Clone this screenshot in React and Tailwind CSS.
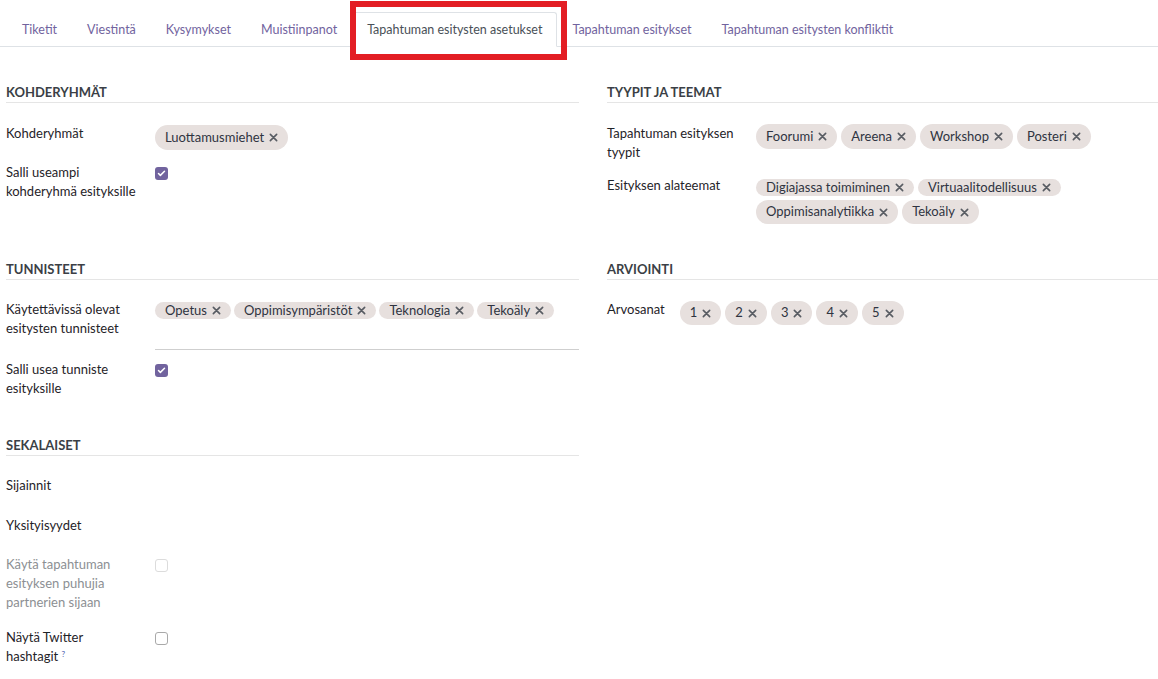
import { Check } from 'lucide-react'

const tabs = [
  'Tiketit',
  'Viestintä',
  'Kysymykset',
  'Muistiinpanot',
  'Tapahtuman esitysten asetukset',
  'Tapahtuman esitykset',
  'Tapahtuman esitysten konfliktit',
]

function XIcon() {
  return (
    <svg width="9" height="9" viewBox="0 0 10 10" className="shrink-0">
      <path d="M1.5 1.5 L8.5 8.5 M8.5 1.5 L1.5 8.5" stroke="#585c63" strokeWidth="1.8" strokeLinecap="round" />
    </svg>
  )
}

function Tag({ text, h = 'h-[25px]' }) {
  return (
    <span className={`inline-flex items-center gap-[5px] rounded-full bg-[#e7e0de] px-[10px] text-[13px] text-[#2f3441] whitespace-nowrap ${h}`}>
      {text}
      <XIcon />
    </span>
  )
}

function CheckBox({ checked, disabled }) {
  if (checked) {
    return (
      <span className="flex h-[13px] w-[13px] items-center justify-center rounded-[3px] bg-[#71639e]">
        <Check className="h-[9px] w-[9px] text-white" strokeWidth={4} />
      </span>
    )
  }
  return (
    <span
      className={`block h-[13px] w-[13px] rounded-[3px] border bg-white ${
        disabled ? 'border-[#dcdcdc]' : 'border-[#a9a9a9]'
      }`}
    />
  )
}

function Header({ children }) {
  return (
    <div className="border-b border-[#e5e5e5] pb-[1px] text-[13px] font-bold uppercase leading-[17px] text-[#3b3f46]">
      {children}
    </div>
  )
}

function Row({ label, children, className = '', muted }) {
  return (
    <div className={`grid grid-cols-[149px_1fr] ${className}`}>
      <div className={`text-[13px] leading-[19px] ${muted ? 'text-[#8c8f93]' : 'text-[#1f2328]'}`}>{label}</div>
      <div>{children}</div>
    </div>
  )
}

export default function App() {
  return (
    <div className="relative min-h-screen bg-white font-['Lato',sans-serif]">
      {/* tab bar */}
      <div className="flex border-b border-[#dee2e6] pl-[7px] pt-[12px]">
        {tabs.map((t, i) => {
          const active = i === 4
          return (
            <div
              key={t}
              className={`-mb-px text-[12.5px] leading-[19px] ${
                active
                  ? 'rounded-t-[3px] border border-b-white border-[#dee2e6] bg-white px-[14px] py-[7px] text-[#495057]'
                  : 'px-[15px] pb-[8px] pt-[8px] text-[#71639e]'
              }`}
            >
              {t}
            </div>
          )
        })}
      </div>

      {/* highlight box */}
      <div className="pointer-events-none absolute left-[350px] top-[1px] h-[59px] w-[217px] border-[6px] border-[#e31e24]" />

      <div className="grid grid-cols-[573px_1fr] gap-x-[28px] pl-[6px] pt-[37px]">
        {/* KOHDERYHMÄT */}
        <div>
          <Header>Kohderyhmät</Header>
          <div className="mt-[21px]">
            <Row label="Kohderyhmät">
              <Tag text="Luottamusmiehet" />
            </Row>
            <Row label={<>Salli useampi<br />kohderyhmä esityksille</>} className="mt-[13px]">
              <div className="pt-[4px]">
                <CheckBox checked />
              </div>
            </Row>
          </div>
        </div>

        {/* TYYPIT JA TEEMAT */}
        <div>
          <Header>Tyypit ja teemat</Header>
          <div className="mt-[21px]">
            <Row label={<>Tapahtuman esityksen<br />tyypit</>}>
              <div className="flex flex-wrap gap-[4px]">
                <Tag text="Foorumi" />
                <Tag text="Areena" />
                <Tag text="Workshop" />
                <Tag text="Posteri" />
              </div>
            </Row>
            <Row label="Esityksen alateemat" className="mt-[14px]">
              <div className="flex flex-col gap-[4px] pt-[3px]">
                <div className="flex gap-[4px]">
                  <Tag text="Digiajassa toimiminen" h="h-[17px]" />
                  <Tag text="Virtuaalitodellisuus" h="h-[17px]" />
                </div>
                <div className="flex gap-[4px]">
                  <Tag text="Oppimisanalytiikka" h="h-[24px]" />
                  <Tag text="Tekoäly" h="h-[24px]" />
                </div>
              </div>
            </Row>
          </div>
        </div>

        {/* TUNNISTEET */}
        <div className="mt-[37px]">
          <Header>Tunnisteet</Header>
          <div className="mt-[20px]">
            <Row label={<>Käytettävissä olevat<br />esitysten tunnisteet</>}>
              <div className="h-[50px] border-b border-[#cfcfcf] pt-[2px]">
                <div className="flex flex-wrap gap-[3px]">
                  <Tag text="Opetus" h="h-[17px]" />
                  <Tag text="Oppimisympäristöt" h="h-[17px]" />
                  <Tag text="Teknologia" h="h-[17px]" />
                  <Tag text="Tekoäly" h="h-[17px]" />
                </div>
              </div>
            </Row>
            <Row label={<>Salli usea tunniste<br />esityksille</>} className="mt-[10px]">
              <div className="pt-[4px]">
                <CheckBox checked />
              </div>
            </Row>
          </div>
        </div>

        {/* ARVIOINTI */}
        <div className="mt-[37px]">
          <Header>Arviointi</Header>
          <div className="mt-[20px] flex items-start gap-[15px]">
            <div className="text-[13px] leading-[19px] text-[#1f2328]">Arvosanat</div>
            <div className="flex gap-[4px] pt-[1px]">
              {['1', '2', '3', '4', '5'].map((n) => (
                <Tag key={n} text={n} h="h-[24px]" />
              ))}
            </div>
          </div>
        </div>

        {/* SEKALAISET */}
        <div className="mt-[39px] pb-[20px]">
          <Header>Sekalaiset</Header>
          <div className="mt-[20px]">
            <Row label="Sijainnit" className="h-[40px]" />
            <Row label="Yksityisyydet" className="h-[39px]" />
            <Row label={<>Käytä tapahtuman<br />esityksen puhujia<br />partnerien sijaan</>} muted>
              <div className="pt-[4px]">
                <CheckBox disabled />
              </div>
            </Row>
            <Row
              label={
                <>
                  Näytä Twitter
                  <br />
                  hashtagit <sup className="text-[8px] text-[#4a5bb0]">?</sup>
                </>
              }
              className="mt-[16px]"
            >
              <div className="pt-[4px]">
                <CheckBox />
              </div>
            </Row>
          </div>
        </div>
        <div />
      </div>
    </div>
  )
}
